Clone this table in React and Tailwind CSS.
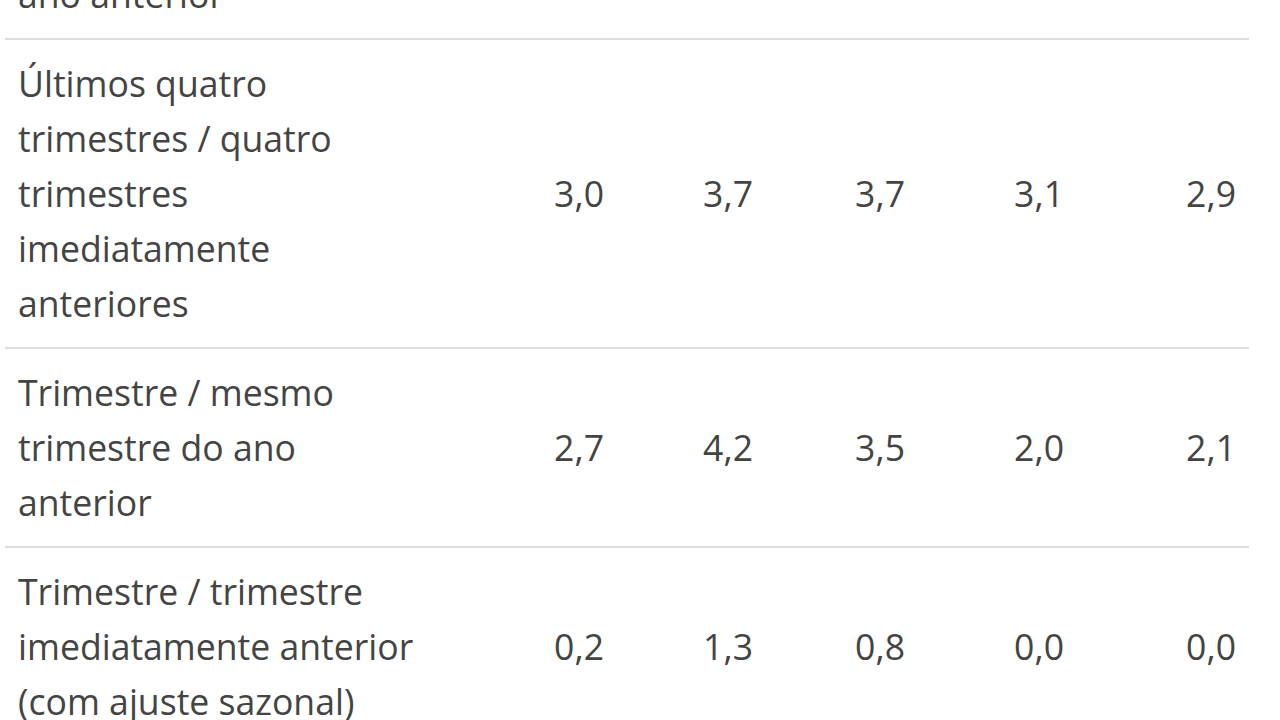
export default function App() {
  const rows = [
    { label: <>Acumulado no ano /<br />mesmo período do<br />ano anterior</>, values: ["2,7", "4,2", "3,5", "2,0", "2,1"] },
    { label: "Últimos quatro trimestres / quatro trimestres imediatamente anteriores", values: ["3,0", "3,7", "3,7", "3,1", "2,9"] },
    { label: "Trimestre / mesmo trimestre do ano anterior", values: ["2,7", "4,2", "3,5", "2,0", "2,1"] },
    { label: "Trimestre / trimestre imediatamente anterior (com ajuste sazonal)", values: ["0,2", "1,3", "0,8", "0,0", "0,0"] },
  ];
  const widths = ["w-[177px]", "w-[149px]", "w-[152px]", "w-[159px]", "w-[172px]"];
  return (
    <div className="w-[1280px] h-[720px] overflow-hidden bg-white" style={{ fontFamily: '"Open Sans", sans-serif' }}>
      <div className="-mt-[159px] ml-[5px] w-[1244px] text-[35.6px] leading-[55px] text-[#444]">
        {rows.map((r, i) => (
          <div key={i} className="flex items-center border-b-2 border-[#dedede]">
            <div className="w-[435px] shrink-0 pl-[13px] pr-[14px] py-4">{r.label}</div>
            {r.values.map((v, j) => (
              <div key={j} className={`${widths[j]} shrink-0 text-right pr-[13px]`}>{v}</div>
            ))}
          </div>
        ))}
      </div>
    </div>
  );
}
